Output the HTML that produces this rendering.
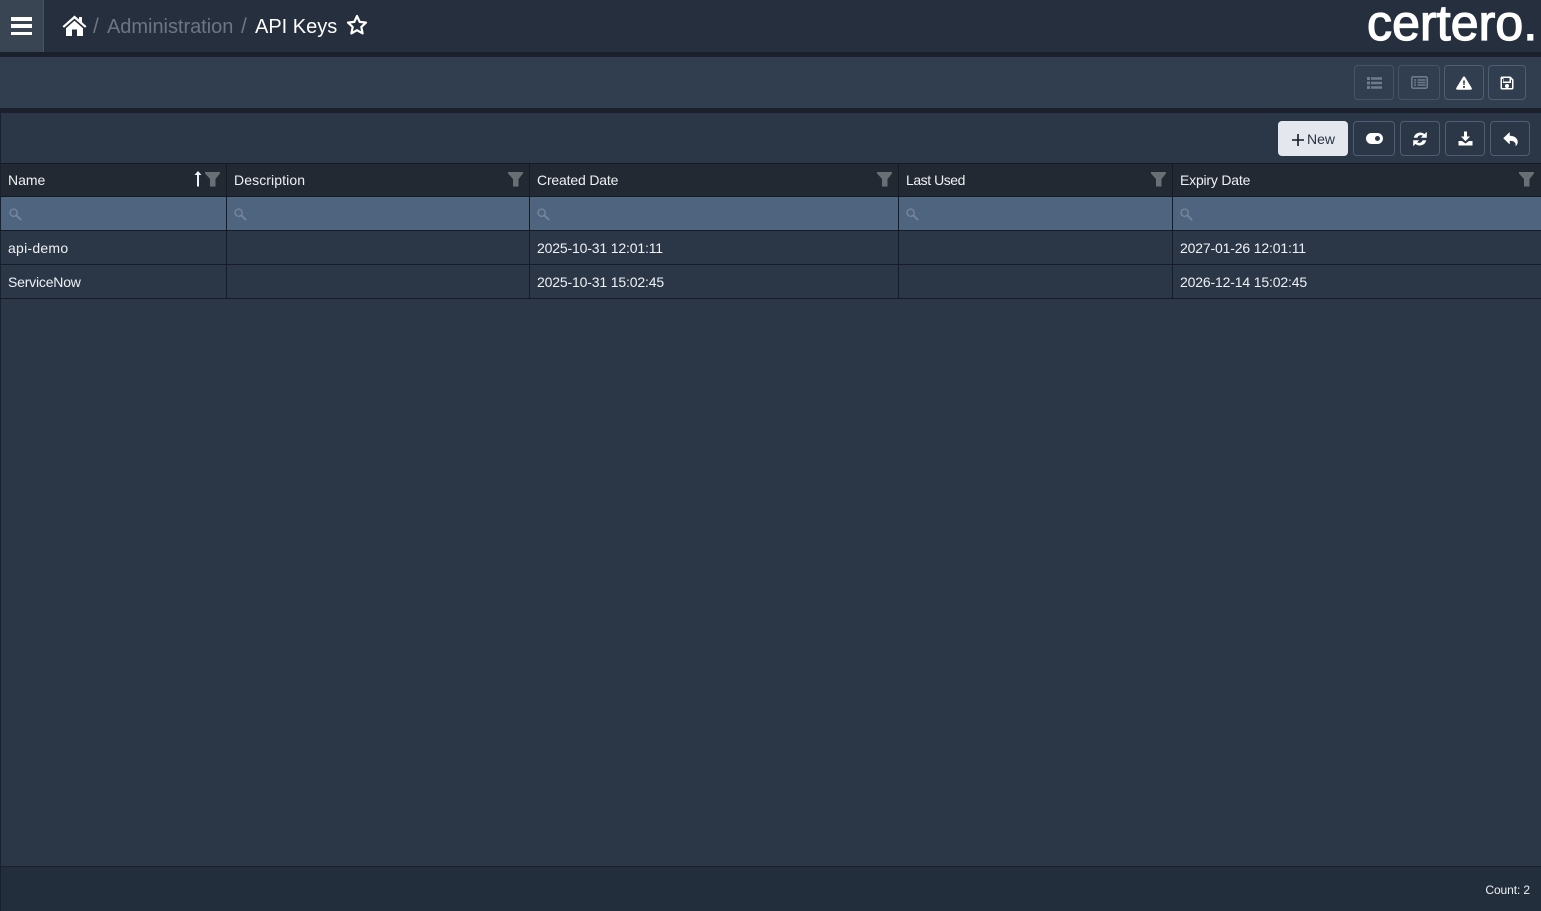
<!DOCTYPE html>
<html><head><meta charset="utf-8"><style>
*{box-sizing:border-box}
html,body{margin:0;padding:0;width:1541px;height:911px;overflow:hidden;background:#2b3747;font-family:"Liberation Sans",sans-serif;color:#f2f4f7}
.a{position:absolute}
.t{position:absolute;white-space:nowrap;font-size:14px;line-height:18px;color:#eef1f4}
.d{letter-spacing:-.16px}
.btn{position:absolute;border:1px solid #4f5e72;border-radius:4px;height:35px;display:flex;align-items:center;justify-content:center}
.vl{position:absolute;width:1px;top:163px;height:136px;background:#161c25}
.hl{position:absolute;left:0;width:1541px;height:1px;background:#161c25}
svg{display:block}
</style></head><body>
<div class="a" style="left:0;top:0;width:1541px;height:52px;background:#252f3e"></div>
<div class="a" style="left:0;top:0;width:44px;height:52px;background:#3a4554;border-right:1px solid #4a5564"></div>
<div class="a" style="left:11px;top:17px;width:21px;height:3.5px;background:#fff"></div>
<div class="a" style="left:11px;top:24px;width:21px;height:3.5px;background:#fff"></div>
<div class="a" style="left:11px;top:31.5px;width:21px;height:3.5px;background:#fff"></div>
<svg class="a" style="left:62px;top:15px" width="25" height="22" viewBox="0 0 25 22"><path fill="#fff" d="M12.5 0.5 L17 4.5 V2 H20 V7.2 L24.5 11.2 L23 12.8 L12.5 3.6 L2 12.8 L0.5 11.2 Z M4 13.2 L12.5 5.7 L21 13.2 V21 H15 V14.5 H10 V21 H4 Z"/></svg>
<div class="t" style="left:93px;top:14px;font-size:21px;line-height:26px;color:#6c7683">/</div>
<div class="t" style="left:107px;top:14px;font-size:20px;line-height:26px;letter-spacing:-.03px;color:#6c7683">Administration</div>
<div class="t" style="left:241px;top:14px;font-size:21px;line-height:26px;color:#6c7683">/</div>
<div class="t" style="left:255px;top:14px;font-size:20px;line-height:26px;color:#fff">API Keys</div>
<svg class="a" style="left:346px;top:14px" width="22" height="22" viewBox="0 0 22 22"><path fill="none" stroke="#fff" stroke-width="2.2" stroke-linejoin="round" d="M11 2 L13.7 7.9 L20 8.6 L15.3 13 L16.6 19.4 L11 16.2 L5.4 19.4 L6.7 13 L2 8.6 L8.3 7.9 Z"/></svg>
<div class="t" style="left:1367px;top:-3px;font-size:50px;line-height:52px;letter-spacing:.1px;-webkit-text-stroke:1.3px #fff;color:#fff">certero.</div>

<div class="a" style="left:0;top:52px;width:1541px;height:5px;background:#1a212c"></div>
<div class="a" style="left:0;top:57px;width:1541px;height:51px;background:#303e50"></div>
<div class="a" style="left:0;top:108px;width:1541px;height:5px;background:#1a212c"></div>

<div class="btn" style="left:1354px;top:65px;width:40px;border-color:#465467"><svg width="15" height="12" viewBox="0 0 15 12"><path fill="#6d7b8c" d="M0 0h3v3H0zM4 0.300h11v2.400H4zM0 4.500h3v3H0zM4 4.800h11v2.400H4zM0 9h3v3H0zM4 9.300h11v2.400H4z"/></svg></div>
<div class="btn" style="left:1398px;top:65px;width:42px;border-color:#465467"><svg width="17" height="13" viewBox="0 0 17 13"><rect x=".8" y=".8" width="15.4" height="11.4" rx="1.500" fill="none" stroke="#6d7b8c" stroke-width="1.600"/><path fill="#6d7b8c" d="M3 3.300h2v1.400H3zM6.500 3.300h8v1.400h-8zM3 5.800h2v1.400H3zM6.500 5.800h8v1.400h-8zM3 8.300h2v1.400H3zM6.500 8.300h8v1.400h-8z"/></svg></div>
<div class="btn" style="left:1444px;top:65px;width:40px"><svg width="16" height="14" viewBox="0 0 16 14"><path fill="#fff" fill-rule="evenodd" d="M8 0.500 C8.500 0.500 8.900 0.700 9.100 1.100 L15.700 12 C16.200 12.800 15.600 13.700 14.700 13.700 H1.300 C0.400 13.700 -0.200 12.800 0.300 12 L6.900 1.100 C7.100 0.700 7.500 0.500 8 0.500 Z M7.100 4.500 L7.400 9 H8.600 L8.900 4.500 Z M7 10 V11.800 H9 V10 Z"/></svg></div>
<div class="btn" style="left:1488px;top:65px;width:38px"><svg width="14" height="14" viewBox="0 0 14 14"><path fill="#fff" fill-rule="evenodd" d="M1.500 0.500 H10.500 L13.500 3.500 V12 A1.500 1.500 0 0 1 12 13.500 H2 A1.500 1.500 0 0 1 0.500 12 V2 A1.500 1.500 0 0 1 1.500 .5 Z M3.500 2 V5.500 H9.500 V2 Z M2 3 H3 V7 H11 V3.500 L12 4 V12 H2 Z M7 8 A2 2 0 1 0 7 12 A2 2 0 1 0 7 8 Z"/></svg></div>

<div class="a" style="left:0;top:113px;width:1px;height:798px;background:#1a212c"></div>
<div class="a" style="left:1278px;top:121px;width:70px;height:35px;background:#e4e8ee;border-radius:4px"></div>
<svg class="a" style="left:1292px;top:134px" width="12" height="12" viewBox="0 0 12 12"><path stroke="#141a22" stroke-width="1.600" d="M6 0V12M0 6H12"/></svg>
<div class="t" style="left:1307px;top:130px;color:#2a3442;font-size:14px">New</div>
<div class="btn" style="left:1353px;top:121px;width:42px"><svg width="17" height="11" viewBox="0 0 17 11"><path fill="#fff" fill-rule="evenodd" d="M5.500 0 H11.500 A5.500 5.500 0 0 1 11.500 11 H5.500 A5.500 5.500 0 0 1 5.500 0 Z M11.500 3 A2.500 2.500 0 1 0 11.500 8 A2.500 2.500 0 1 0 11.500 3 Z"/></svg></div>
<div class="btn" style="left:1400px;top:121px;width:40px"><svg width="14" height="14" viewBox="0 0 14 14"><path fill="#fff" stroke="#fff" stroke-width=".6" d="M13.500 0.500 V5.500 H8.500 L10.300 3.700 C8.400 2.200 5.200 2.700 4.100 5.500 H1.200 C2.200 1 7.800 -0.700 11.500 2.500 Z M0.500 13.500 V8.500 H5.500 L3.700 10.300 C5.600 11.800 8.800 11.300 9.900 8.500 H12.800 C11.800 13 6.200 14.700 2.500 11.500 Z"/></svg></div>
<div class="btn" style="left:1445px;top:121px;width:40px"><svg width="15" height="15" viewBox="0 0 15 15"><path fill="#fff" d="M6 0.500 H9 V5.500 H12 L7.500 10.300 L3 5.500 H6 Z M0.500 10 H4 L7.500 12.500 L11 10 H14.500 V14.500 H0.500 Z"/></svg></div>
<div class="btn" style="left:1490px;top:121px;width:40px"><svg width="15" height="14" viewBox="0 0 15 14"><path fill="#fff" stroke="#fff" stroke-width=".5" d="M6.500 0.500 V4 C11 4 14.500 6 14.500 10 C14.500 11.500 13.800 12.800 12.800 13.700 C13.300 10.500 11 8.500 6.500 8.500 V12 L0.500 6.200 Z"/></svg></div>

<div class="a" style="left:1px;top:163px;width:1540px;height:34px;background:#232932"></div>
<div class="a" style="left:1px;top:197px;width:1540px;height:34px;background:#4f647f"></div>
<div class="hl" style="top:163px"></div>
<div class="hl" style="top:196px"></div>
<div class="hl" style="top:230px"></div>
<div class="hl" style="top:264px"></div>
<div class="hl" style="top:298px"></div>
<div class="vl" style="left:226px"></div>
<div class="vl" style="left:529px"></div>
<div class="vl" style="left:898px"></div>
<div class="vl" style="left:1172px"></div>

<div class="t" style="left:8px;top:171px">Name</div>
<div class="t" style="left:234px;top:171px;letter-spacing:.1px">Description</div>
<div class="t" style="left:537px;top:171px;letter-spacing:-.17px">Created Date</div>
<div class="t" style="left:906px;top:171px;letter-spacing:-.45px">Last Used</div>
<div class="t" style="left:1180px;top:171px;letter-spacing:-.2px">Expiry Date</div>
<svg class="a" style="left:194px;top:171px" width="8" height="16" viewBox="0 0 8 16"><path fill="#f2f4f7" d="M4 0 L7.500 4 H5 V15.500 H3 V4 H0.500 Z"/></svg>
<svg class="a" style="left:205px;top:172px" width="15" height="15" viewBox="0 0 15 15"><path fill="#6a6f76" d="M0 0 H15 V1.500 L10.500 7 V14.500 L5 14.500 V7 L0 1.500 Z"/></svg>
<svg class="a" style="left:508px;top:172px" width="15" height="15" viewBox="0 0 15 15"><path fill="#6a6f76" d="M0 0 H15 V1.500 L10.500 7 V14.500 L5 14.500 V7 L0 1.500 Z"/></svg>
<svg class="a" style="left:877px;top:172px" width="15" height="15" viewBox="0 0 15 15"><path fill="#6a6f76" d="M0 0 H15 V1.500 L10.500 7 V14.500 L5 14.500 V7 L0 1.500 Z"/></svg>
<svg class="a" style="left:1151px;top:172px" width="15" height="15" viewBox="0 0 15 15"><path fill="#6a6f76" d="M0 0 H15 V1.500 L10.500 7 V14.500 L5 14.500 V7 L0 1.500 Z"/></svg>
<svg class="a" style="left:1519px;top:172px" width="15" height="15" viewBox="0 0 15 15"><path fill="#6a6f76" d="M0 0 H15 V1.500 L10.500 7 V14.500 L5 14.500 V7 L0 1.500 Z"/></svg>

<svg class="a" style="left:9px;top:208px" width="13" height="13" viewBox="0 0 14 14"><circle cx="5" cy="5" r="3.900" fill="none" stroke="#75869b" stroke-width="1.500"/><path stroke="#75869b" stroke-width="2" d="M8 8 L13 13"/></svg>
<svg class="a" style="left:234px;top:208px" width="13" height="13" viewBox="0 0 14 14"><circle cx="5" cy="5" r="3.900" fill="none" stroke="#75869b" stroke-width="1.500"/><path stroke="#75869b" stroke-width="2" d="M8 8 L13 13"/></svg>
<svg class="a" style="left:537px;top:208px" width="13" height="13" viewBox="0 0 14 14"><circle cx="5" cy="5" r="3.900" fill="none" stroke="#75869b" stroke-width="1.500"/><path stroke="#75869b" stroke-width="2" d="M8 8 L13 13"/></svg>
<svg class="a" style="left:906px;top:208px" width="13" height="13" viewBox="0 0 14 14"><circle cx="5" cy="5" r="3.900" fill="none" stroke="#75869b" stroke-width="1.500"/><path stroke="#75869b" stroke-width="2" d="M8 8 L13 13"/></svg>
<svg class="a" style="left:1180px;top:208px" width="13" height="13" viewBox="0 0 14 14"><circle cx="5" cy="5" r="3.900" fill="none" stroke="#75869b" stroke-width="1.500"/><path stroke="#75869b" stroke-width="2" d="M8 8 L13 13"/></svg>

<div class="t" style="left:8px;top:239px;letter-spacing:.25px">api-demo</div>
<div class="t d" style="left:537px;top:239px">2025-10-31 12:01:11</div>
<div class="t d" style="left:1180px;top:239px">2027-01-26 12:01:11</div>
<div class="t" style="left:8px;top:273px;letter-spacing:-.2px">ServiceNow</div>
<div class="t d" style="left:537px;top:273px">2025-10-31 15:02:45</div>
<div class="t d" style="left:1180px;top:273px">2026-12-14 15:02:45</div>

<div class="a" style="left:0;top:866px;width:1541px;height:1px;background:#1a212c"></div>
<div class="a" style="left:1px;top:867px;width:1540px;height:44px;background:#232e3c"></div>
<div class="t" style="right:11px;top:881px;font-size:12px;letter-spacing:-.1px">Count: 2</div>
</body></html>
